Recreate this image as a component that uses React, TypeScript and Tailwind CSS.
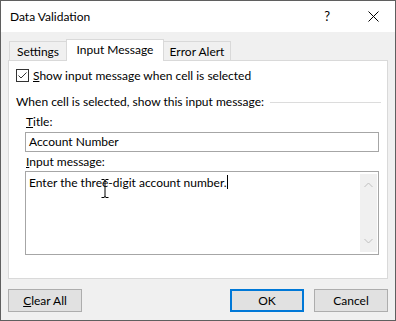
import React from "react";

const font = { fontFamily: 'Lato, "Noto Sans", sans-serif' };

function Tab({ label, active, w }: { label: string; active?: boolean; w: string }) {
  if (active) {
    return (
      <div className={"h-[22px] -mx-px relative z-10 bg-white border border-b-0 border-[#d9d9d9] flex items-center justify-center pb-[1px] text-[12px] text-black " + w}>
        {label}
      </div>
    );
  }
  return (
    <div className={"h-[20px] border border-b-0 border-[#d9d9d9] flex items-center justify-center text-[12px] text-black " + w}>
      {label}
    </div>
  );
}

function Button({ children, primary }: { children: React.ReactNode; primary?: boolean }) {
  return (
    <div
      className={
        "w-[74px] h-[23px] flex items-center justify-center bg-[#e1e1e1] text-[12px] text-black " +
        (primary ? "border-2 border-[#0078d7]" : "border border-[#adadad]")
      }
    >
      {children}
    </div>
  );
}

export default function App() {
  return (
    <div style={font} className="w-[396px] h-[321px] border border-[#5f5f5f] bg-[#f0f0f0] flex flex-col text-black overflow-hidden">
      {/* title bar */}
      <div className="h-[31px] bg-white flex items-center pl-[9px] pr-[16px] shrink-0">
        <span className="text-[12px]">Data Validation</span>
        <span className="ml-auto text-[13px] mr-[38px]">?</span>
        <svg width="11" height="11" viewBox="0 0 11 11">
          <path d="M0.5 0.5 L10.5 10.5 M10.5 0.5 L0.5 10.5" stroke="#000" strokeWidth="1" />
        </svg>
      </div>

      {/* tabs */}
      <div className="flex items-end pl-[8px] pt-[7px] -mb-px shrink-0">
        <Tab label="Settings" w="w-[58px]" />
        <Tab label="Input Message" w="w-[98px]" active />
        <Tab label="Error Alert" w="w-[68px]" />
      </div>

      {/* panel */}
      <div className="mx-[7px] h-[219px] bg-white border border-[#d9d9d9] flex flex-col shrink-0">
        <div className="mt-[8px] ml-[7px] h-[13px] flex items-center gap-[4px] text-[12px]">
          <div className="w-[13px] h-[13px] border border-[#333] flex items-center justify-center">
            <svg width="11" height="11" viewBox="0 0 11 11">
              <path d="M1.5 5.5 L4 8 L9.5 2.5" stroke="#333" strokeWidth="1" fill="none" />
            </svg>
          </div>
          <span>
            <span className="underline">S</span>how input message when cell is selected
          </span>
        </div>

        <div className="mt-[12px] ml-[7px] mr-[6px] h-[16px] flex items-center gap-[6px] text-[12px]">
          <span className="whitespace-nowrap">When cell is selected, show this input message:</span>
          <div className="flex-1 h-px bg-[#dcdcdc]" />
        </div>

        <div className="mt-[4px] ml-[17px] h-[16px] flex items-center text-[12px]">
          <span>
            <span className="underline">T</span>itle:
          </span>
        </div>
        <div className="mt-[2px] ml-[16px] w-[354px] h-[20px] border border-[#a6a6a6] flex items-center pl-[3px] text-[12px]">
          Account Number
        </div>

        <div className="mt-[2px] ml-[17px] h-[16px] flex items-center text-[12px]">
          <span>
            <span className="underline">I</span>nput message:
          </span>
        </div>
        <div className="mt-px ml-[16px] w-[354px] h-[84px] border border-[#a6a6a6] flex text-[12px] relative">
          <div className="flex-1 pl-[3px] pt-[2px] flex items-start">
            <span>Enter the three-digit account number.</span>
            <span className="w-px h-[14px] bg-black mt-[1px]" />
          </div>
          <div className="w-[17px] my-[2px] mr-px bg-[#f0f0f0] flex flex-col items-center justify-between py-[8px]">
            <svg width="9" height="6" viewBox="0 0 9 6">
              <path d="M0.5 5 L4.5 1 L8.5 5" stroke="#bfbfbf" fill="none" />
            </svg>
            <svg width="9" height="6" viewBox="0 0 9 6">
              <path d="M0.5 1 L4.5 5 L8.5 1" stroke="#bfbfbf" fill="none" />
            </svg>
          </div>
          {/* I-beam cursor */}
          <svg className="absolute left-[75px] top-[7px]" width="8" height="19" viewBox="0 0 8 19">
            <path d="M0.5 0.5 H3 M5 0.5 H7.5 M4 1 V18 M0.5 18.5 H3 M5 18.5 H7.5 M3 1 H5 M3 18 H5" stroke="#000" strokeWidth="1" fill="none" />
          </svg>
        </div>
      </div>

      {/* buttons */}
      <div className="mt-[10px] mx-[7px] flex items-center">
        <Button>
          <span>
            <span className="underline">C</span>lear All
          </span>
        </Button>
        <div className="ml-auto flex gap-[10px]">
          <Button primary>OK</Button>
          <Button>Cancel</Button>
        </div>
      </div>
    </div>
  );
}
